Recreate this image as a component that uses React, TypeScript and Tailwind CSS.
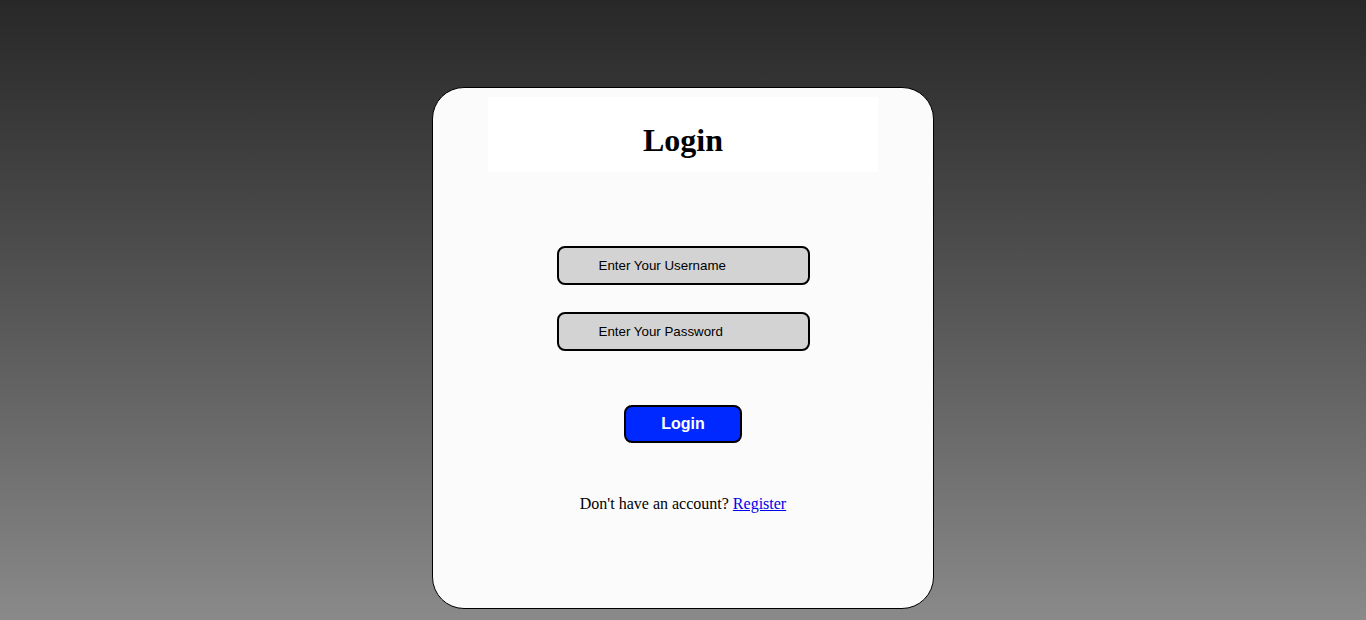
export default function App() {
  return (
    <div className="w-full h-[620px] bg-gradient-to-b from-[#282828] to-[#8a8a8a] flex justify-center pt-[87px] overflow-hidden">
      <div className="w-[502px] h-[522px] bg-[#fbfbfb] border border-black rounded-[32px] flex flex-col items-center pt-[9px]">
        <div className="w-[390px] h-[75px] bg-white flex items-center justify-center">
          <h1 className="text-[32px] font-bold text-black pt-[10px] font-['Liberation_Serif',serif]">Login</h1>
        </div>
        <input
          className="mt-[74px] w-[253px] h-[39px] bg-[#d3d3d3] border-2 border-black rounded-[8px] pl-[40px] text-[13.33px] text-black placeholder:text-black outline-none font-['Liberation_Sans',Arial,sans-serif]"
          placeholder="Enter Your Username"
        />
        <input
          type="password"
          className="mt-[27px] w-[253px] h-[39px] bg-[#d3d3d3] border-2 border-black rounded-[8px] pl-[40px] text-[13.33px] text-black placeholder:text-black outline-none font-['Liberation_Sans',Arial,sans-serif]"
          placeholder="Enter Your Password"
        />
        <button className="mt-[54px] w-[118px] h-[38px] bg-[#0029ff] border-2 border-black rounded-[8px] text-white font-bold text-[16px] font-['Liberation_Sans',Arial,sans-serif]">
          Login
        </button>
        <p className="mt-[49px] text-[16px] text-black font-['Liberation_Serif',serif]">
          Don't have an account? <a href="#" className="text-[#0000ee] underline">Register</a>
        </p>
      </div>
    </div>
  );
}
